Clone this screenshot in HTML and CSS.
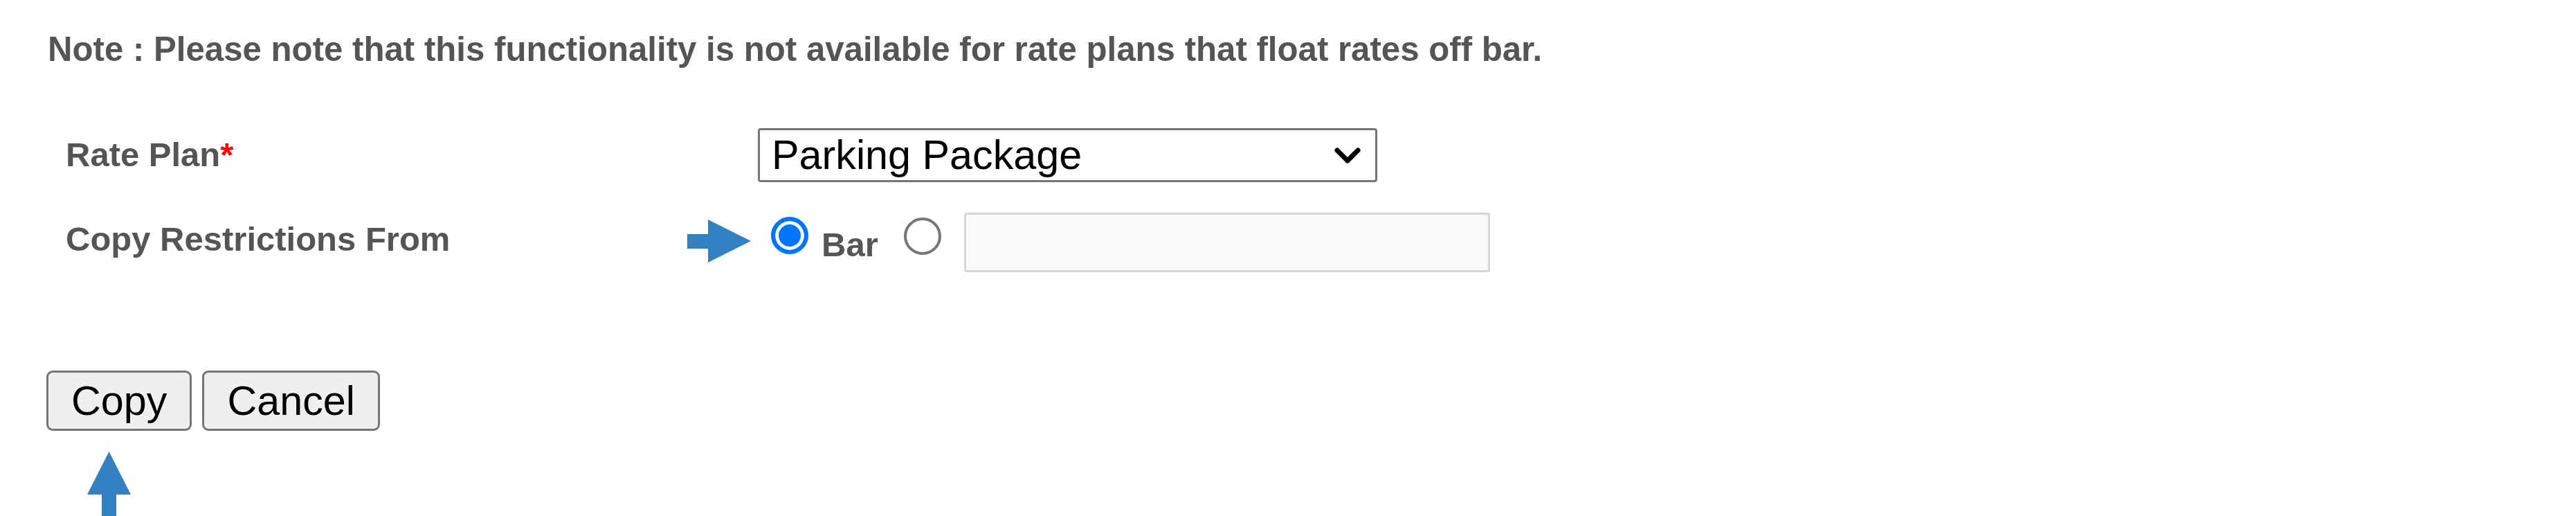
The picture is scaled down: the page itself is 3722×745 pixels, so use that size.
FILE: index.html
```html
<!DOCTYPE html>
<html lang="en">
<head>
<meta charset="utf-8">
<title>Copy Restrictions</title>
<link rel="stylesheet" href="styles.css">
</head>
<body>
<div class="page">
  <p class="note">Note : Please note that this functionality is not available for rate plans that float rates off bar.</p>

  <div class="form">
    <div class="label">Rate Plan<span class="req">*</span></div>
    <div class="select" role="combobox" aria-expanded="false">
      <span class="select-text">Parking Package</span>
      <svg class="chevron" width="40" height="25" viewBox="0 0 40 25" aria-hidden="true">
        <polyline points="5,5 20,20 35,5" fill="none" stroke="#000" stroke-width="7" stroke-linecap="round" stroke-linejoin="round"/>
      </svg>
    </div>

    <div class="label">Copy Restrictions From</div>
    <div class="choices">
      <span class="radio checked" role="radio" aria-checked="true"></span>
      <span class="choice-label">Bar</span>
      <span class="radio unchecked" role="radio" aria-checked="false"></span>
      <input class="text-input" type="text" disabled>
    </div>
  </div>

  <div class="buttons">
    <button class="btn" type="button">Copy</button>
    <button class="btn" type="button">Cancel</button>
  </div>

  <svg class="arrow arrow-right" width="92" height="62" viewBox="0 0 92 62" aria-hidden="true">
    <polygon points="0,21 30,21 30,0 92,31 30,62 30,42 0,42" fill="#3380c2"/>
  </svg>
  <svg class="arrow arrow-up" width="63" height="93" viewBox="0 0 63 93" aria-hidden="true">
    <polygon points="31.5,0 63,62 42,62 42,93 21,93 21,62 0,62" fill="#3380c2"/>
  </svg>
</div>
</body>
</html>
```

FILE: styles.css
```css
html, body {
  margin: 0;
  padding: 0;
  background: #ffffff;
  overflow: hidden;
}

.page {
  position: relative;
  width: 3722px;
  height: 745px;
  font-family: "Liberation Sans", Arial, sans-serif;
}

.note {
  margin: 0;
  padding: 41px 0 0 69px;
  font-size: 49.2px;
  line-height: 60px;
  font-weight: bold;
  color: #555555;
  white-space: nowrap;
}

.form {
  display: grid;
  grid-template-columns: 1000px auto;
  row-gap: 44px;
  margin: 84px 0 0 95px;
}

.label {
  align-self: start;
  margin-top: 8px;
  font-size: 49px;
  line-height: 60px;
  font-weight: bold;
  color: #555555;
  white-space: nowrap;
}

.req {
  color: #ff0000;
}

.select {
  box-sizing: border-box;
  width: 895px;
  height: 78px;
  border: 3px solid #767676;
  border-radius: 4px;
  background: #ffffff;
  display: flex;
  align-items: center;
  justify-content: space-between;
  padding: 0 20px 0 17px;
}

.select-text {
  font-size: 59.3px;
  line-height: 66px;
  color: #000000;
  white-space: nowrap;
}

.chevron {
  display: block;
  flex: none;
}

.choices {
  display: flex;
  align-items: flex-start;
  height: 86px;
}

.radio {
  display: block;
  box-sizing: border-box;
  width: 54px;
  height: 54px;
  border-radius: 50%;
  flex: none;
}

.radio.checked {
  margin: 6px 0 0 19px;
  border: 6px solid #0075ff;
  background: #0075ff;
  box-shadow: inset 0 0 0 5px #ffffff;
}

.radio.unchecked {
  margin: 7px 0 0 37px;
  border: 4px solid #767676;
  background: #ffffff;
}

.choice-label {
  margin: 16px 0 0 19px;
  font-size: 49px;
  line-height: 60px;
  font-weight: bold;
  color: #555555;
}

.text-input {
  box-sizing: border-box;
  margin: 0 0 0 33px;
  width: 760px;
  height: 86px;
  border: 3px solid #d6d6d6;
  border-radius: 4px;
  background: #fafafa;
  padding: 0;
  font-size: 59px;
}

.buttons {
  display: flex;
  gap: 15px;
  margin: 142px 0 0 67px;
}

.btn {
  box-sizing: border-box;
  height: 87px;
  padding: 0 33px;
  margin: 0;
  border: 3px solid #767676;
  border-radius: 9px;
  background: #efefef;
  color: #000000;
  font-family: "Liberation Sans", Arial, sans-serif;
  font-size: 59.3px;
  line-height: 66px;
}

.arrow {
  position: absolute;
  display: block;
}

.arrow-right {
  left: 993px;
  top: 317px;
}

.arrow-up {
  left: 126px;
  top: 652px;
}
```
